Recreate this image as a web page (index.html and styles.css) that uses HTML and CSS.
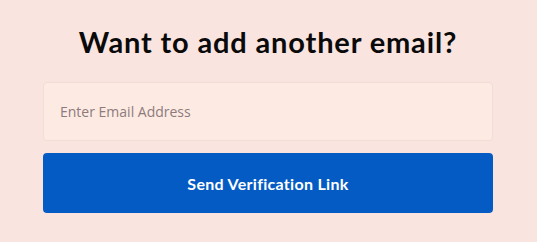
FILE: index.html
```html
<!DOCTYPE html>
<html lang="en">
<head>
<meta charset="utf-8">
<title>Add email</title>
<link rel="stylesheet" href="styles.css">
</head>
<body>
<main class="panel">
  <h1 class="title">Want to add another email?</h1>
  <form class="form" onsubmit="return false">
    <input class="email" type="email" placeholder="Enter Email Address">
    <button class="send" type="submit">Send Verification Link</button>
  </form>
</main>
</body>
</html>
```

FILE: styles.css
```css
html, body {
  margin: 0;
  padding: 0;
  background: #f9e4df;
}
body {
  width: 537px;
  height: 242px;
  overflow: hidden;
}
.panel {
  padding: 24px 44px 0 43px;
  display: flex;
  flex-direction: column;
}
.title {
  margin: 0;
  text-align: center;
  font-family: "Lato", "Noto Sans", sans-serif;
  font-weight: 700;
  font-size: 29px;
  line-height: 36px;
  color: #0a0a0a;
  letter-spacing: 0.85px;
}
.form {
  margin-top: 22px;
  display: flex;
  flex-direction: column;
  gap: 12px;
}
.email {
  box-sizing: border-box;
  height: 59px;
  width: 100%;
  padding: 0 16px;
  border: 1px solid #f2dcd4;
  border-radius: 4px;
  background: #fdebe3;
  font-family: "Open Sans", sans-serif;
  font-size: 14px;
  color: #333;
  outline: none;
}
.email::placeholder {
  color: #8d7a7c;
}
.send {
  height: 60px;
  width: 100%;
  border: 0;
  border-radius: 4px;
  background: #055bc4;
  color: #fff;
  font-family: "Lato", "Noto Sans", sans-serif;
  font-weight: 700;
  font-size: 16px;
  letter-spacing: 0.3px;
  cursor: pointer;
}
```
